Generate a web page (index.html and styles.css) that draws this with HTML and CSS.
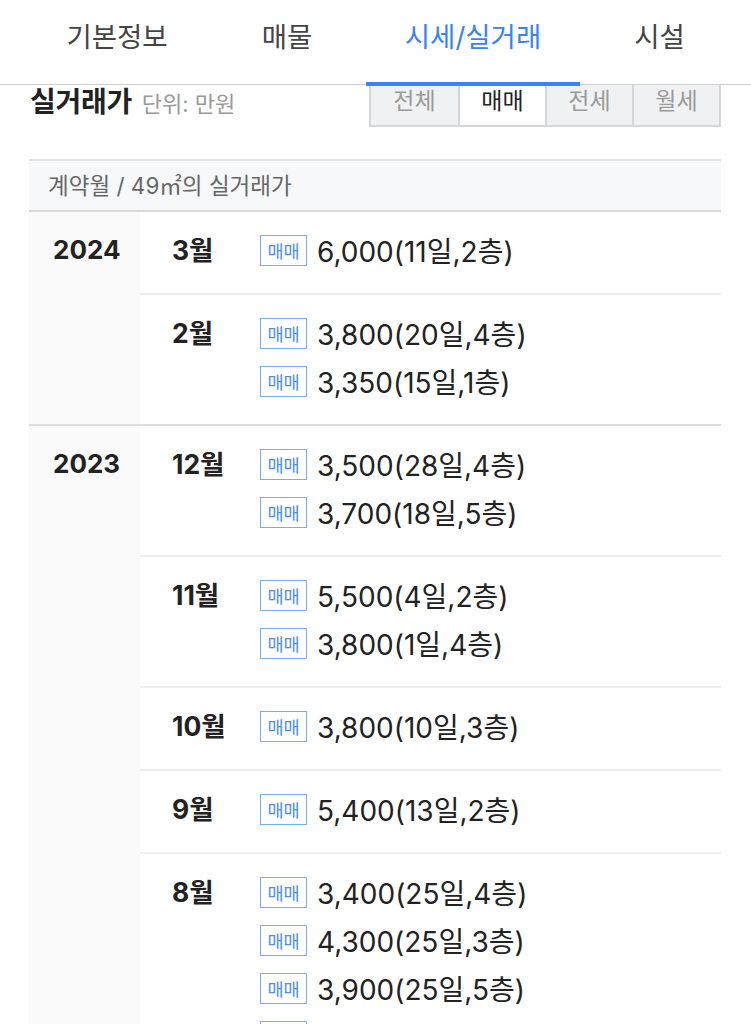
FILE: index.html
```html
<!DOCTYPE html>
<html lang="ko">
<head>
<meta charset="utf-8">
<link rel="stylesheet" href="styles.css">
</head>
<body>
<nav class="tabs">
  <div class="tab t1">기본정보</div>
  <div class="tab t2">매물</div>
  <div class="tab t3 active">시세/실거래</div>
  <div class="tab t4">시설</div>
</nav>
<main class="content">
  <div class="section-head">
    <div class="title"><span class="title-main">실거래가</span><span class="unit">단위: 만원</span></div>
    <div class="seg">
      <div class="seg-btn">전체</div>
      <div class="seg-btn on">매매</div>
      <div class="seg-btn">전세</div>
      <div class="seg-btn">월세</div>
    </div>
  </div>
  <div class="table">
    <div class="thead">계약월 / 49㎡의 실거래가</div>
    <div class="year-group">
      <div class="year">2024</div>
      <div class="months">
        <div class="month-row">
          <div class="month">3월</div>
          <div class="entries">
            <div class="entry"><span class="badge">매매</span><span class="price">6,000(11일,2층)</span></div>
          </div>
        </div>
        <div class="month-row">
          <div class="month">2월</div>
          <div class="entries">
            <div class="entry"><span class="badge">매매</span><span class="price">3,800(20일,4층)</span></div>
            <div class="entry"><span class="badge">매매</span><span class="price">3,350(15일,1층)</span></div>
          </div>
        </div>
      </div>
    </div>
    <div class="year-group">
      <div class="year">2023</div>
      <div class="months">
        <div class="month-row">
          <div class="month">12월</div>
          <div class="entries">
            <div class="entry"><span class="badge">매매</span><span class="price">3,500(28일,4층)</span></div>
            <div class="entry"><span class="badge">매매</span><span class="price">3,700(18일,5층)</span></div>
          </div>
        </div>
        <div class="month-row">
          <div class="month">11월</div>
          <div class="entries">
            <div class="entry"><span class="badge">매매</span><span class="price">5,500(4일,2층)</span></div>
            <div class="entry"><span class="badge">매매</span><span class="price">3,800(1일,4층)</span></div>
          </div>
        </div>
        <div class="month-row">
          <div class="month">10월</div>
          <div class="entries">
            <div class="entry"><span class="badge">매매</span><span class="price">3,800(10일,3층)</span></div>
          </div>
        </div>
        <div class="month-row">
          <div class="month">9월</div>
          <div class="entries">
            <div class="entry"><span class="badge">매매</span><span class="price">5,400(13일,2층)</span></div>
          </div>
        </div>
        <div class="month-row">
          <div class="month">8월</div>
          <div class="entries">
            <div class="entry"><span class="badge">매매</span><span class="price">3,400(25일,4층)</span></div>
            <div class="entry"><span class="badge">매매</span><span class="price">4,300(25일,3층)</span></div>
            <div class="entry"><span class="badge">매매</span><span class="price">3,900(25일,5층)</span></div>
            <div class="entry"><span class="badge">매매</span><span class="price">4,000(25일,2층)</span></div>
          </div>
        </div>
      </div>
    </div>
  </div>
</main>
</body>
</html>
```

FILE: styles.css
```css
* { box-sizing: border-box; }
html, body { margin: 0; padding: 0; background: #fff; }
body {
  font-family: Inter, "Noto Sans CJK KR", sans-serif;
  color: #222;
  width: 751px;
  overflow: hidden;
}
.tabs {
  position: relative;
  z-index: 2;
  background: #fff;
  height: 85px;
  border-bottom: 1px solid #cfcfcf;
  display: flex;
  padding-left: 28px;
}
.tab {
  position: relative;
  flex: none;
  text-align: center;
  height: 84px;
  line-height: 74px;
  font-size: 27.5px;
  color: #444;
  white-space: nowrap;
}
.t1 { width: 178px; }
.t2 { width: 126px; margin-left: 18px; }
.t3 { width: 214px; margin-left: 16px; }
.t4 { width: 127px; margin-left: 16px; }
.tab.active { color: #3a82f6; }
.tab.active::after {
  content: "";
  position: absolute;
  left: 0; right: 0;
  bottom: -2px;
  height: 4px;
  background: #3a82f6;
}
.content { margin-top: -14px; position: relative; z-index: 1; }
.section-head {
  display: flex;
  justify-content: space-between;
  align-items: center;
  padding: 0 30px 0 30px;
  height: 56px;
}
.title { display: flex; align-items: baseline; gap: 10px; padding-top: 2px; }
.title-main { font-size: 28px; font-weight: 700; color: #222; letter-spacing: -0.3px; }
.unit { font-size: 22px; color: #999; }
.seg { display: flex; height: 56px; border: 2px solid #d6d6d6; border-top: none; background: #f0f1f3; }
.seg-btn {
  width: 87px;
  display: flex;
  align-items: center;
  justify-content: center;
  padding-top: 2px;
  font-size: 23px;
  color: #9a9a9a;
  border-left: 2px solid #d6d6d6;
}
.seg-btn:first-child { border-left: none; }
.seg-btn.on { background: #fff; color: #222; }
.table { margin: 32px 30px 0 29px; }
.thead {
  height: 53px;
  border-top: 2px solid #e2e2e2;
  border-bottom: 2px solid #d9d9d9;
  background: #f7f8fa;
  padding-left: 19px;
  font-size: 22.5px;
  color: #666;
  line-height: 49px;
}
.year-group {
  display: flex;
  border-bottom: 2px solid #ddd;
}
.year {
  width: 111px;
  flex: none;
  background: #fafafa;
  padding: 14px 0 0 24px;
  line-height: 48px;
  font-size: 26px;
  font-weight: 700;
  color: #222;
}
.months { flex: 1; }
.month-row {
  display: flex;
  padding: 14px 0 19px;
  border-bottom: 2px solid #eee;
}
.month-row:last-child { border-bottom: none; }
.month {
  width: 120px;
  flex: none;
  padding-left: 32px;
  line-height: 48px;
  font-size: 26.5px;
  font-weight: 700;
  color: #222;
}
.entries { flex: 1; }
.entry { display: flex; align-items: center; height: 48px; }
.badge {
  width: 47px;
  height: 31px;
  border: 1px solid #76aef5;
  color: #4a8ef0;
  font-size: 17.5px;
  display: flex;
  align-items: center;
  justify-content: center;
  margin-right: 10px;
  flex: none;
}
.price { font-size: 28px; color: #222; }
```
